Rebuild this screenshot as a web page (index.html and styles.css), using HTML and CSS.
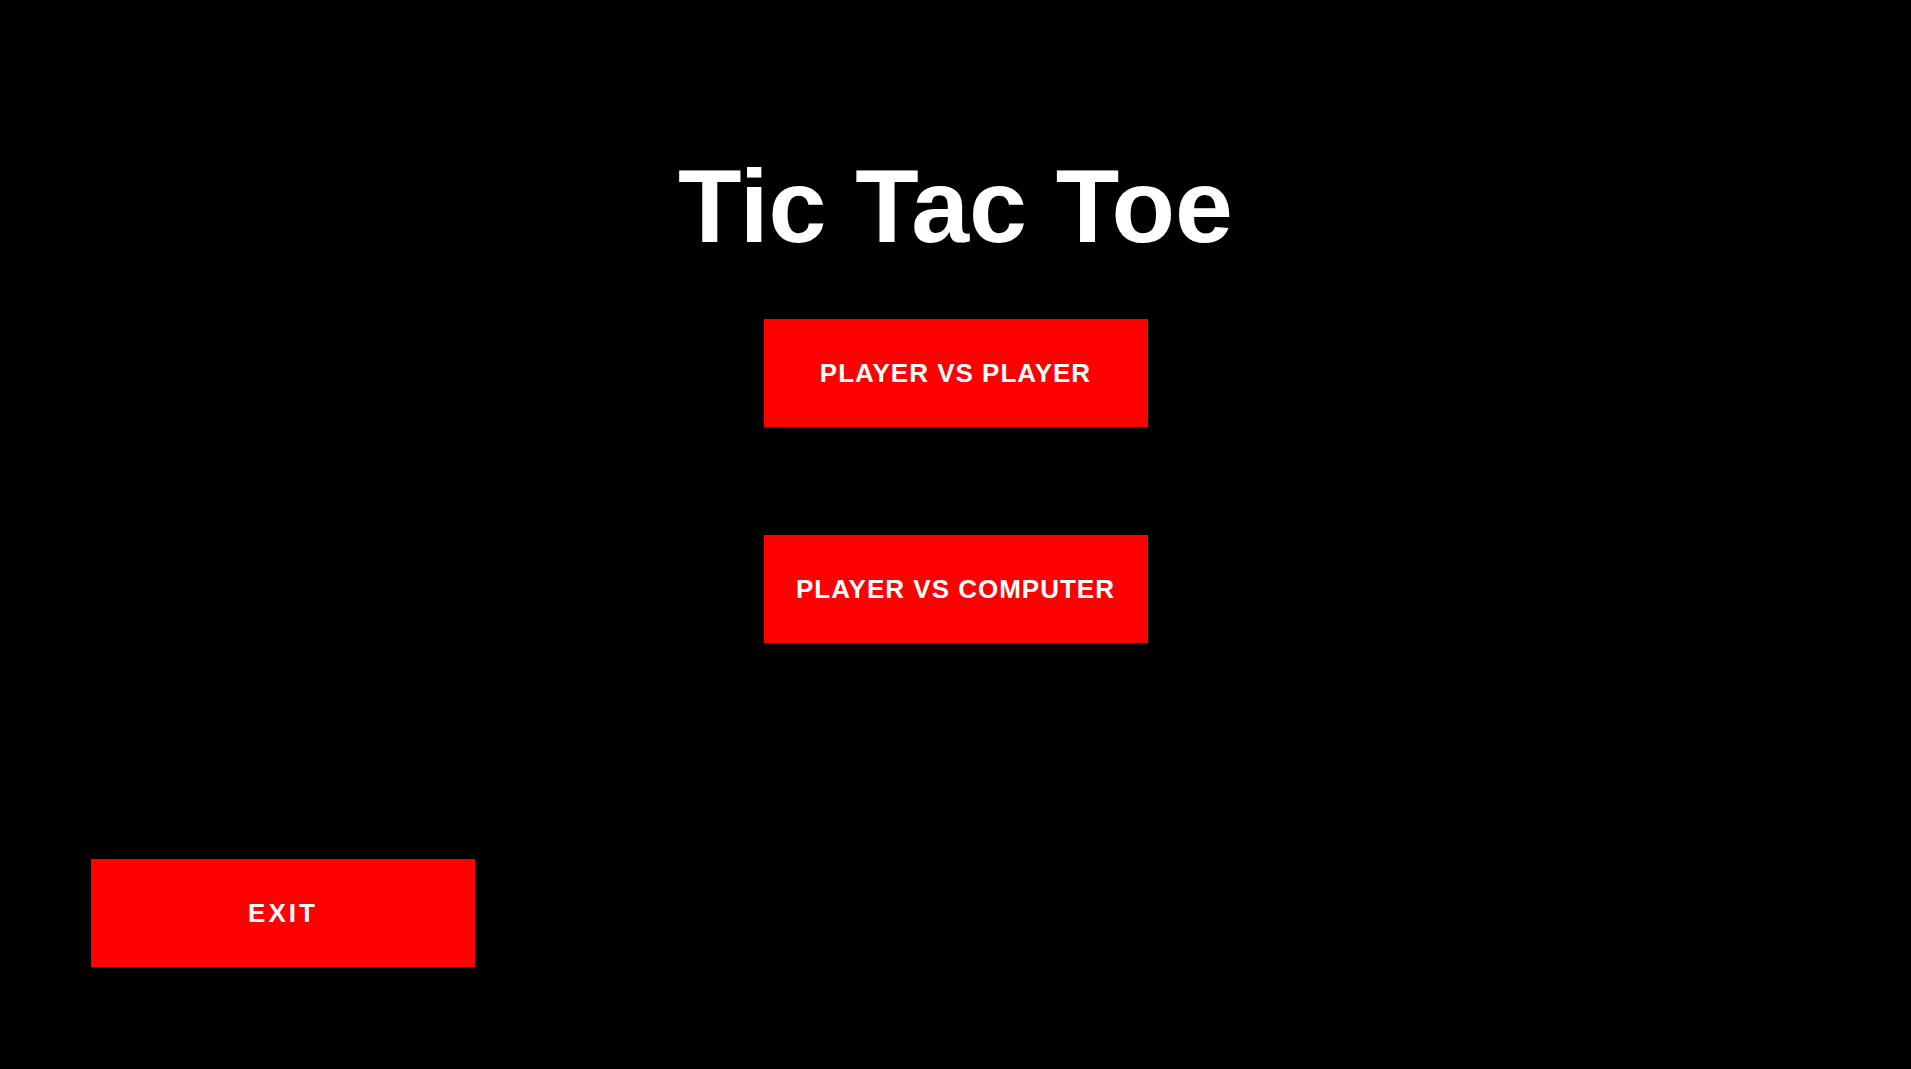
FILE: index.html
```html
<!DOCTYPE html>
<html lang="en">
<head>
<meta charset="utf-8">
<title>Tic Tac Toe</title>
<link rel="stylesheet" href="styles.css">
</head>
<body>
<main class="screen">
  <h1 class="title">Tic Tac Toe</h1>
  <div class="modes">
    <button class="btn">PLAYER VS PLAYER</button>
    <button class="btn">PLAYER VS COMPUTER</button>
  </div>
  <div class="footer">
    <button class="btn btn-exit">EXIT</button>
  </div>
</main>
</body>
</html>
```

FILE: styles.css
```css
html, body {
  margin: 0;
  padding: 0;
  background: #000;
  height: 100%;
}

body {
  font-family: "Liberation Sans", Arial, Helvetica, sans-serif;
  color: #fff;
  overflow: hidden;
}

.screen {
  display: flex;
  flex-direction: column;
  align-items: center;
  padding-top: 154px;
}

.title {
  margin: 0;
  font-size: 104px;
  line-height: 1;
  font-weight: 700;
  letter-spacing: 0;
  color: #fff;
}

.modes {
  display: flex;
  flex-direction: column;
  align-items: center;
  gap: 108px;
  margin-top: 61px;
}

.btn {
  display: flex;
  align-items: center;
  justify-content: center;
  width: 384px;
  height: 108px;
  padding: 0;
  border: none;
  background: #ff0000;
  color: #fff;
  font-family: "Liberation Sans", Arial, Helvetica, sans-serif;
  font-weight: 700;
  font-size: 26px;
  letter-spacing: 1px;
  cursor: pointer;
}

.footer {
  align-self: stretch;
  display: flex;
  padding-left: 91px;
  margin-top: 216px;
}

.btn-exit {
  letter-spacing: 3px;
}
```
